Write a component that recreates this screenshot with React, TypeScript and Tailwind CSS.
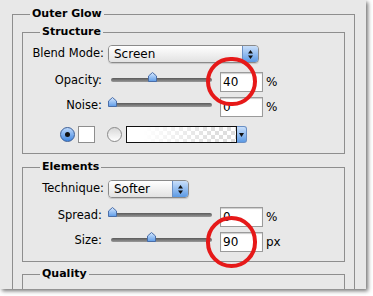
const font = { fontFamily: '"DejaVu Sans", Verdana, sans-serif' }

function Thumb() {
  return (
    <svg width="9" height="10" viewBox="0 0 9 10">
      <defs>
        <linearGradient id="th" x1="0" y1="0" x2="0" y2="1">
          <stop offset="0" stopColor="#d6e8ff" />
          <stop offset="1" stopColor="#5e9ce8" />
        </linearGradient>
      </defs>
      <polygon points="4.5,0.5 8.5,4 8.5,9.5 0.5,9.5 0.5,4" fill="url(#th)" stroke="#4a6ea8" strokeWidth="1" />
    </svg>
  )
}

function Slider({ at }: { at: number }) {
  return (
    <div className="relative ml-[6px] h-[20px] w-[104px] shrink-0">
      <div className="absolute left-[3px] right-0 top-[6px] h-[4px] rounded-full bg-gradient-to-b from-[#5a5a5a] to-[#9a9a9a]" />
      <div className="absolute top-0" style={{ left: at - 4 }}>
        <Thumb />
      </div>
    </div>
  )
}

function Field({ value, unit }: { value: string; unit: string }) {
  return (
    <>
      <div className="ml-[8px] flex h-[20px] w-[43px] shrink-0 items-center border border-[#9b9b9b] bg-white pl-[2px] text-[12px] shadow-[inset_0_1px_1px_rgba(0,0,0,0.2)]">
        {value}
      </div>
      <span className="ml-[3px] text-[12px]">{unit}</span>
    </>
  )
}

function SliderRow({ label, at, value, unit, top }: { label: string; at: number; value: string; unit: string; top: string }) {
  return (
    <div className={`flex h-[20px] items-center ${top}`}>
      <span className="w-[79px] shrink-0 pb-[3px] text-right">{label}</span>
      <Slider at={at} />
      <Field value={value} unit={unit} />
    </div>
  )
}

function Arrows() {
  return (
    <svg width="7" height="11" viewBox="0 0 7 11">
      <polygon points="3.5,1 6,4.5 1,4.5" fill="#111" />
      <polygon points="3.5,10 6,6.5 1,6.5" fill="#111" />
    </svg>
  )
}

function Popup({ text, width }: { text: string; width: string }) {
  return (
    <div className={`ml-[4px] flex h-[18px] ${width} shrink-0 overflow-hidden rounded-[4px] border border-[#8a8a8a] shadow-[0_1px_1px_rgba(0,0,0,0.15)]`}>
      <div className="flex flex-1 items-center bg-gradient-to-b from-white to-[#e2e2e2] pl-[5px] text-[12px]">{text}</div>
      <div className="flex w-[16px] items-center justify-center border-l border-[#6a8fc4] bg-gradient-to-b from-[#c9dffa] to-[#5c9ae4]">
        <Arrows />
      </div>
    </div>
  )
}

function Group({ title, className, children }: { title: string; className: string; children?: React.ReactNode }) {
  return (
    <div className={`relative border-[#8e8e8e] ${className}`}>
      <span className="absolute left-[17px] top-[-9px] bg-[#e8e8e8] px-[2px] text-[11px] font-bold leading-[16px]">{title}</span>
      {children}
    </div>
  )
}

export default function App() {
  return (
    <div className="h-[296px] w-[373px] bg-white" style={font}>
      <div className="relative h-[289px] w-[366px] overflow-hidden bg-[#e8e8e8] text-[11.5px] leading-none text-black shadow-[2px_2px_4px_rgba(0,0,0,0.55)]">
        <Group title="Outer Glow" className="ml-[12px] mt-[14px] h-[300px] w-[343px] border-l border-r border-t">
          <Group title="Structure" className="ml-[9px] mt-[17px] w-[323px] border pb-[10px] pt-[12px]">
            <div className="flex h-[18px] items-center">
              <span className="w-[81px] shrink-0 text-right">Blend Mode:</span>
              <Popup text="Screen" width="w-[151px]" />
            </div>
            <SliderRow label="Opacity:" at={44} value="40" unit="%" top="mt-[9px]" />
            <SliderRow label="Noise:" at={4} value="0" unit="%" top="mt-[5px]" />
            <div className="mt-[9px] flex h-[17px] items-center">
              <div className="ml-[37px] flex h-[15px] w-[15px] shrink-0 items-center justify-center rounded-full border border-[#3b5e96] bg-gradient-to-b from-[#bcd8fb] to-[#3f86e0]">
                <div className="h-[5px] w-[5px] rounded-full bg-[#111]" />
              </div>
              <div className="ml-[3px] h-[17px] w-[17px] shrink-0 border border-[#8e8e8e] bg-white" />
              <div className="ml-[12px] h-[15px] w-[15px] shrink-0 rounded-full border border-[#8a8a8a] bg-gradient-to-b from-[#d8d8d8] to-white" />
              <div className="relative ml-[4px] h-[17px] w-[111px] shrink-0 border border-[#111] bg-[repeating-conic-gradient(#dedede_0_25%,#ffffff_0_50%)] bg-[length:8px_8px]">
                <div className="absolute inset-0 bg-gradient-to-r from-white from-15% to-transparent to-80%" />
              </div>
              <div className="flex h-[17px] w-[10px] shrink-0 items-center justify-center rounded-r-[3px] border border-l-0 border-[#6a8fc4] bg-gradient-to-b from-[#c9dffa] to-[#5c9ae4]">
                <svg width="5" height="4" viewBox="0 0 5 4">
                  <polygon points="0,0 5,0 2.5,4" fill="#111" />
                </svg>
              </div>
            </div>
          </Group>
          <Group title="Elements" className="ml-[9px] mt-[13px] w-[323px] border pb-[9px] pt-[12px]">
            <div className="flex h-[18px] items-center">
              <span className="w-[81px] shrink-0 text-right">Technique:</span>
              <Popup text="Softer" width="w-[81px]" />
            </div>
            <SliderRow label="Spread:" at={4} value="0" unit="%" top="mt-[9px]" />
            <SliderRow label="Size:" at={43} value="90" unit="px" top="mt-[5px]" />
          </Group>
          <Group title="Quality" className="ml-[9px] mt-[12px] h-[60px] w-[323px] border" />
        </Group>
        <div className="absolute left-[206px] top-[57px] h-[49px] w-[51px] rounded-full border-[4px] border-[#e61919]" />
        <div className="absolute left-[206px] top-[216px] h-[52px] w-[51px] rounded-full border-[4px] border-[#e61919]" />
      </div>
    </div>
  )
}
